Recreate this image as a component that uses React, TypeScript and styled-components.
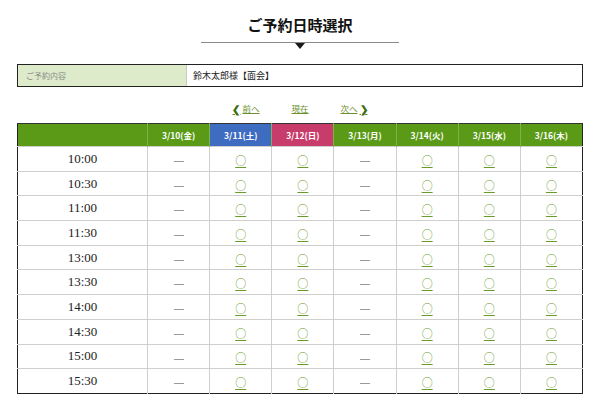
import React from "react";
import styled, { createGlobalStyle } from "styled-components";

const GlobalStyle = createGlobalStyle`
  html, body { margin: 0; padding: 0; background: #fff; }
  body { font-family: "Liberation Serif", "Noto Sans CJK JP", serif; color: #222; }
`;

const Page = styled.div`
  width: 600px;
  padding: 0 17px;
  box-sizing: border-box;
`;

const TitleBlock = styled.div`
  display: flex;
  flex-direction: column;
  align-items: center;
  padding-top: 14px;
`;

const Title = styled.h1`
  margin: 0;
  font-family: "Noto Sans CJK JP", sans-serif;
  font-weight: 700;
  font-size: 15px;
  line-height: 22px;
  color: #111;
`;

const Rule = styled.div`
  width: 198px;
  height: 1px;
  background: #8a8a8a;
  margin-top: 6px;
`;

const Arrow = styled.div`
  width: 0;
  height: 0;
  border-left: 5px solid transparent;
  border-right: 5px solid transparent;
  border-top: 6px solid #1a1a1a;
`;

const InfoBox = styled.div`
  margin-top: 15px;
  display: grid;
  grid-template-columns: 169px 1fr;
  height: 23px;
  border: 1px solid #222;
  box-sizing: border-box;
  font-family: "Noto Sans CJK JP", sans-serif;
`;

const InfoLabel = styled.div`
  background: #deebca;
  border-right: 1px solid #c9c9c9;
  display: flex;
  align-items: center;
  padding-left: 8px;
  font-size: 8px;
  color: #8a8a8a;
`;

const InfoValue = styled.div`
  display: flex;
  align-items: center;
  padding-left: 6px;
  font-size: 9px;
  color: #222;
`;

const Nav = styled.div`
  display: flex;
  justify-content: center;
  gap: 32px;
  margin-top: 14px;
  height: 14px;
  align-items: center;
  font-family: "Noto Sans CJK JP", sans-serif;
  font-size: 8.5px;
`;

const NavLink = styled.a`
  color: #6b8f2c;
  text-decoration: underline;
  display: flex;
  align-items: center;
  gap: 2px;
`;

const Chevron = styled.span`
  font-weight: 700;
  font-size: 10px;
  color: #3f6e10;
  display: inline-block;
`;

const Table = styled.table`
  margin-top: 8px;
  width: 566px;
  border-collapse: collapse;
  table-layout: fixed;
  border: 1px solid #222;
  border-top: 1px solid #333;
`;

const HeadCell = styled.th<{ $bg: string }>`
  background: ${(p) => p.$bg};
  color: #fff;
  font-family: "Noto Sans CJK JP", sans-serif;
  font-weight: 700;
  font-size: 8.5px;
  line-height: 12px;
  height: 22px;
  padding: 0;
  border-left: 1px solid #7fb24a;
  &:first-child { border-left: none; }
`;

const Row = styled.tr``;

const TimeCell = styled.td`
  text-align: center;
  font-family: "Liberation Serif", serif;
  font-size: 13px;
  line-height: 14px;
  height: 23.7px;
  color: #222;
  padding: 0;
  border-top: 1px solid #cfcfcf;
  border-right: 1px solid #cfcfcf;
`;

const SlotCell = styled.td`
  text-align: center;
  padding: 0;
  line-height: 14px;
  border-top: 1px solid #cfcfcf;
  border-left: 1px solid #cfcfcf;
  font-family: "Noto Sans CJK JP", sans-serif;
`;

const Dash = styled.span`
  display: inline-block;
  width: 10px;
  height: 1px;
  background: #9a9a9a;
  vertical-align: middle;
`;

const Open = styled.a`
  color: #6a9a2a;
  font-size: 11px;
  text-decoration: underline;
  text-underline-offset: 2px;
`;

const days = [
  { label: "3/10(金)", bg: "#5a9a17", open: false },
  { label: "3/11(土)", bg: "#3e6cc0", open: true },
  { label: "3/12(日)", bg: "#c83c6b", open: true },
  { label: "3/13(月)", bg: "#5a9a17", open: false },
  { label: "3/14(火)", bg: "#5a9a17", open: true },
  { label: "3/15(水)", bg: "#5a9a17", open: true },
  { label: "3/16(木)", bg: "#5a9a17", open: true },
];

const times = ["10:00", "10:30", "11:00", "11:30", "13:00", "13:30", "14:00", "14:30", "15:00", "15:30"];

export default function App() {
  return (
    <>
      <GlobalStyle />
      <Page>
        <TitleBlock>
          <Title>ご予約日時選択</Title>
          <Rule />
          <Arrow />
        </TitleBlock>
        <InfoBox>
          <InfoLabel>ご予約内容</InfoLabel>
          <InfoValue>鈴木太郎様【面会】</InfoValue>
        </InfoBox>
        <Nav>
          <NavLink><Chevron>❮</Chevron>前へ</NavLink>
          <NavLink>現在</NavLink>
          <NavLink>次へ<Chevron>❯</Chevron></NavLink>
        </Nav>
        <Table>
          <colgroup>
            <col style={{ width: 130 }} />
            {days.map((d) => (
              <col key={d.label} />
            ))}
          </colgroup>
          <thead>
            <tr>
              <HeadCell $bg="#5a9a17" />
              {days.map((d) => (
                <HeadCell key={d.label} $bg={d.bg}>{d.label}</HeadCell>
              ))}
            </tr>
          </thead>
          <tbody>
            {times.map((t) => (
              <Row key={t}>
                <TimeCell>{t}</TimeCell>
                {days.map((d) => (
                  <SlotCell key={d.label}>
                    {d.open ? <Open>○</Open> : <Dash />}
                  </SlotCell>
                ))}
              </Row>
            ))}
          </tbody>
        </Table>
      </Page>
    </>
  );
}
